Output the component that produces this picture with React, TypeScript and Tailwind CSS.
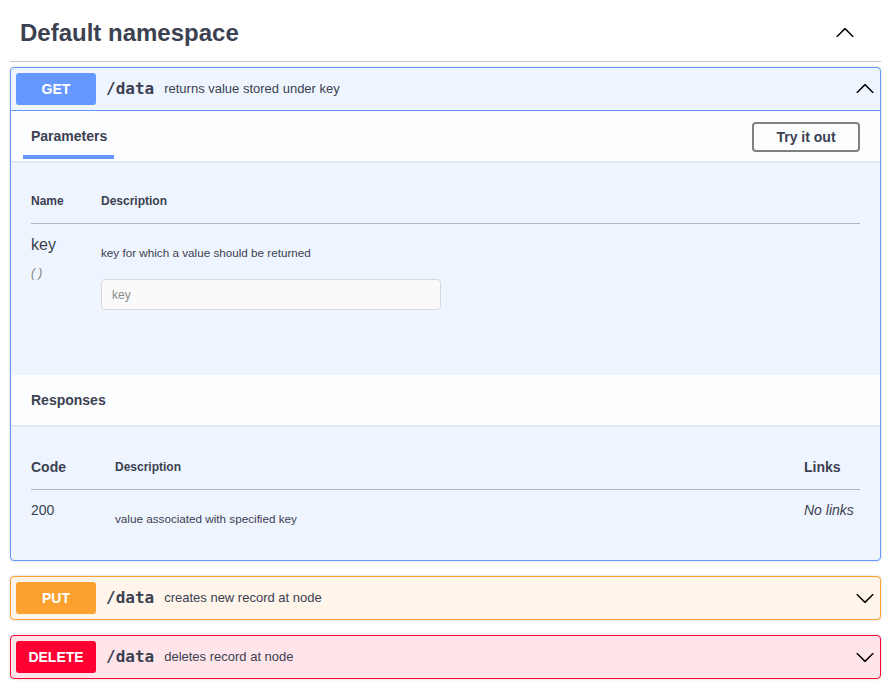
import React from "react";

const ARROW =
  "M17.418 6.109c.272-.268.709-.268.979 0s.271.701 0 .969l-7.908 7.83c-.27.268-.707.268-.979 0l-7.908-7.83c-.27-.268-.27-.701 0-.969.271-.268.709-.268.979 0L10 13.25l7.418-7.141z";

function Arrow({ up }: { up?: boolean }) {
  return (
    <svg viewBox="0 0 20 20" width={20} height={20} className="shrink-0 text-black">
      <path d={ARROW} fill="currentColor" transform={up ? "rotate(180 10 10)" : undefined} />
    </svg>
  );
}

function Summary({
  method,
  btn,
  border,
  desc,
  up,
}: {
  method: string;
  btn: string;
  border: string;
  desc: string;
  up?: boolean;
}) {
  return (
    <div className={`flex items-center p-[5px] ${border}`}>
      <div
        className={`flex h-[32px] w-[80px] shrink-0 items-center justify-center rounded-[3px] text-[14px] font-bold text-white ${btn}`}
      >
        {method}
      </div>
      <span className="pl-[10px] pr-[10px] font-['DejaVu_Sans_Mono',monospace] text-[16px] font-bold text-[#3b4151]">
        /data
      </span>
      <span className="flex-1 text-[13px] text-[#3b4151]">{desc}</span>
      <Arrow up={up} />
    </div>
  );
}

export default function App() {
  return (
    <div className="min-h-screen bg-white pl-[10px] pr-[11px] font-['Liberation_Sans',Arial,sans-serif] text-[#3b4151]">
      {/* Tag header */}
      <div className="mb-[5px] flex h-[62px] items-center border-b border-[rgba(59,65,81,0.3)] pl-[10px] pr-[26px] pt-[5px]">
        <h3 className="flex-1 text-[24px] font-bold text-[#3b4151]">Default namespace</h3>
        <Arrow up />
      </div>

      {/* GET block */}
      <div className="mb-[15px] overflow-hidden rounded-[4px] border border-[#6699ff] bg-[#eff5ff] shadow-[0_0_3px_rgba(0,0,0,0.19)]">
        <Summary
          method="GET"
          btn="bg-[#6699ff]"
          border="border-b border-[#6699ff]"
          desc="returns value stored under key"
          up
        />

        {/* Parameters tab header */}
        <div className="relative z-10 flex h-[50px] items-center bg-[rgba(255,255,255,0.8)] pl-[12px] pr-[20px] shadow-[0_1px_2px_rgba(0,0,0,0.1)]">
          <div className="relative flex h-full items-center px-[8px]">
            <span className="text-[14px] font-bold">Parameters</span>
            <span className="absolute bottom-[2px] left-0 right-[1px] h-[4px] bg-[#6699ff]" />
          </div>
          <div className="flex-1" />
          <button className="mt-[2px] flex h-[30px] w-[108px] items-center justify-center rounded-[4px] border-2 border-[#808080] bg-transparent text-[14px] font-bold text-[#3b4151]">
            Try it out
          </button>
        </div>

        {/* Parameters body */}
        <div className="h-[214px] px-[20px] pt-[21px]">
          <div className="flex h-[42px] items-center border-b border-[rgba(59,65,81,0.35)] pb-[3px] text-[12px] font-bold">
            <div className="w-[70px]">Name</div>
            <div>Description</div>
          </div>
          <div className="flex">
            <div className="w-[70px] pt-[12px]">
              <div className="text-[16px] leading-[18px]">key</div>
              <div className="mt-[12px] text-[12px] italic leading-[14px] text-[#7f7f7f]">( )</div>
            </div>
            <div className="pt-[22px]">
              <div className="text-[11.7px] leading-[14px]">key for which a value should be returned</div>
              <div className="mt-[19px] flex h-[31px] w-[340px] items-center rounded-[4px] border border-[#d9d9d9] bg-[#fafafa] pl-[10px] text-[12px] text-[#8a8a8a]">
                key
              </div>
            </div>
          </div>
        </div>

        {/* Responses header */}
        <div className="relative z-10 flex h-[50px] items-center bg-[rgba(255,255,255,0.8)] px-[20px] shadow-[0_1px_2px_rgba(0,0,0,0.1)]">
          <span className="text-[14px] font-bold">Responses</span>
        </div>

        {/* Responses body */}
        <div className="h-[135px] px-[20px] pt-[21px]">
          <div className="flex h-[44px] items-center border-b border-[rgba(59,65,81,0.35)]">
            <div className="w-[84px] text-[14px] font-bold">Code</div>
            <div className="flex-1 pb-[2px] text-[12px] font-bold">Description</div>
            <div className="w-[56px] text-[14px] font-bold">Links</div>
          </div>
          <div className="flex">
            <div className="w-[84px] pt-[12px] text-[14px] leading-[16px]">200</div>
            <div className="flex-1 pt-[22px] text-[11.7px] leading-[14px]">value associated with specified key</div>
            <div className="w-[56px] pt-[12px] text-[14px] italic leading-[16px]">No links</div>
          </div>
        </div>
      </div>

      {/* PUT block */}
      <div className="mb-[15px] rounded-[4px] border border-[#fca130] bg-[#fff5ea] shadow-[0_0_3px_rgba(0,0,0,0.19)]">
        <Summary method="PUT" btn="bg-[#fca130]" border="" desc="creates new record at node" />
      </div>

      {/* DELETE block */}
      <div className="mb-[15px] rounded-[4px] border border-[#ff0033] bg-[#ffe5ea] shadow-[0_0_3px_rgba(0,0,0,0.19)]">
        <Summary method="DELETE" btn="bg-[#ff0033]" border="" desc="deletes record at node" />
      </div>
    </div>
  );
}
